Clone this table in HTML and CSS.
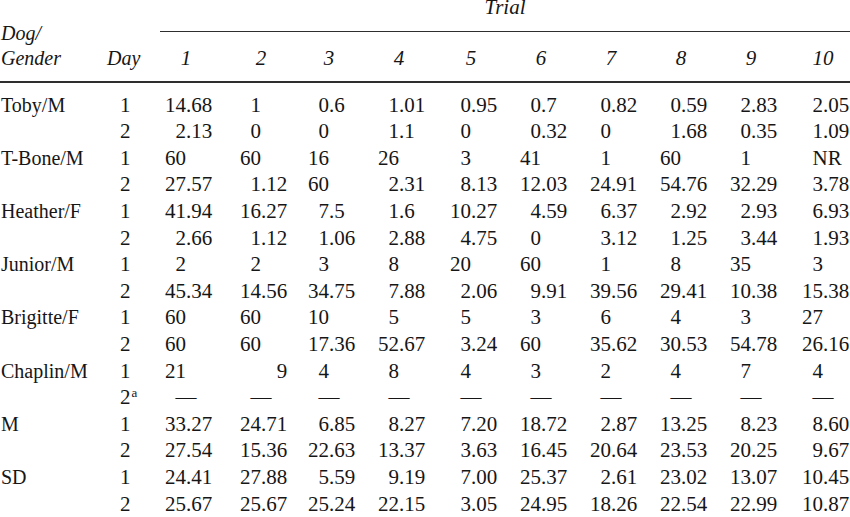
FILE: index.html
```html
<!DOCTYPE html>
<html lang="en">
<head>
<meta charset="utf-8">
<title>Trial latencies by dog</title>
<link rel="stylesheet" href="styles.css">
</head>
<body>
<table class="t">
  <colgroup>
    <col class="c-dog"><col class="c-day">
    <col class="w75"><col class="w68"><col class="w70"><col class="w72"><col class="w70">
    <col class="w70"><col class="w70"><col class="w70"><col class="w72"><col class="w53">
  </colgroup>
  <thead>
    <tr>
      <th class="dg" rowspan="2">Dog/<br>Gender</th>
      <th class="blank"></th>
      <th class="trial" colspan="10">Trial</th>
    </tr>
    <tr class="hr">
      <th class="dayh">Day</th>
      <th><span class="hn">1</span></th>
      <th><span class="hn">2</span></th>
      <th><span class="hn">3</span></th>
      <th><span class="hn">4</span></th>
      <th><span class="hn">5</span></th>
      <th><span class="hn">6</span></th>
      <th><span class="hn">7</span></th>
      <th><span class="hn">8</span></th>
      <th><span class="hn">9</span></th>
      <th><span class="hn">10</span></th>
    </tr>
  </thead>
  <tbody>
    <tr>
      <td class="lab">Toby/M</td><td class="day">1</td>
      <td><span class="i">14</span>.68</td><td><span class="i">1</span></td><td><span class="i">0</span>.6</td><td><span class="i">1</span>.01</td><td><span class="i">0</span>.95</td>
      <td><span class="i">0</span>.7</td><td><span class="i">0</span>.82</td><td><span class="i">0</span>.59</td><td><span class="i">2</span>.83</td><td><span class="i">2</span>.05</td>
    </tr>
    <tr>
      <td class="lab"></td><td class="day">2</td>
      <td><span class="i">2</span>.13</td><td><span class="i">0</span></td><td><span class="i">0</span></td><td><span class="i">1</span>.1</td><td><span class="i">0</span></td>
      <td><span class="i">0</span>.32</td><td><span class="i">0</span></td><td><span class="i">1</span>.68</td><td><span class="i">0</span>.35</td><td><span class="i">1</span>.09</td>
    </tr>
    <tr>
      <td class="lab">T-Bone/M</td><td class="day">1</td>
      <td><span class="i">60</span></td><td><span class="i">60</span></td><td><span class="i">16</span></td><td><span class="i">26</span></td><td><span class="i">3</span></td>
      <td><span class="i">41</span></td><td><span class="i">1</span></td><td><span class="i">60</span></td><td><span class="i">1</span></td><td class="off">NR</td>
    </tr>
    <tr>
      <td class="lab"></td><td class="day">2</td>
      <td><span class="i">27</span>.57</td><td><span class="i">1</span>.12</td><td><span class="i">60</span></td><td><span class="i">2</span>.31</td><td><span class="i">8</span>.13</td>
      <td><span class="i">12</span>.03</td><td><span class="i">24</span>.91</td><td><span class="i">54</span>.76</td><td><span class="i">32</span>.29</td><td><span class="i">3</span>.78</td>
    </tr>
    <tr>
      <td class="lab">Heather/F</td><td class="day">1</td>
      <td><span class="i">41</span>.94</td><td><span class="i">16</span>.27</td><td><span class="i">7</span>.5</td><td><span class="i">1</span>.6</td><td><span class="i">10</span>.27</td>
      <td><span class="i">4</span>.59</td><td><span class="i">6</span>.37</td><td><span class="i">2</span>.92</td><td><span class="i">2</span>.93</td><td><span class="i">6</span>.93</td>
    </tr>
    <tr>
      <td class="lab"></td><td class="day">2</td>
      <td><span class="i">2</span>.66</td><td><span class="i">1</span>.12</td><td><span class="i">1</span>.06</td><td><span class="i">2</span>.88</td><td><span class="i">4</span>.75</td>
      <td><span class="i">0</span></td><td><span class="i">3</span>.12</td><td><span class="i">1</span>.25</td><td><span class="i">3</span>.44</td><td><span class="i">1</span>.93</td>
    </tr>
    <tr>
      <td class="lab">Junior/M</td><td class="day">1</td>
      <td><span class="i">2</span></td><td><span class="i">2</span></td><td><span class="i">3</span></td><td><span class="i">8</span></td><td><span class="i">20</span></td>
      <td><span class="i">60</span></td><td><span class="i">1</span></td><td><span class="i">8</span></td><td><span class="i">35</span></td><td><span class="i">3</span></td>
    </tr>
    <tr>
      <td class="lab"></td><td class="day">2</td>
      <td><span class="i">45</span>.34</td><td><span class="i">14</span>.56</td><td><span class="i">34</span>.75</td><td><span class="i">7</span>.88</td><td><span class="i">2</span>.06</td>
      <td><span class="i">9</span>.91</td><td><span class="i">39</span>.56</td><td><span class="i">29</span>.41</td><td><span class="i">10</span>.38</td><td><span class="i">15</span>.38</td>
    </tr>
    <tr>
      <td class="lab">Brigitte/F</td><td class="day">1</td>
      <td><span class="i">60</span></td><td><span class="i">60</span></td><td><span class="i">10</span></td><td><span class="i">5</span></td><td><span class="i">5</span></td>
      <td><span class="i">3</span></td><td><span class="i">6</span></td><td><span class="i">4</span></td><td><span class="i">3</span></td><td><span class="i">27</span></td>
    </tr>
    <tr>
      <td class="lab"></td><td class="day">2</td>
      <td><span class="i">60</span></td><td><span class="i">60</span></td><td><span class="i">17</span>.36</td><td><span class="i">52</span>.67</td><td><span class="i">3</span>.24</td>
      <td><span class="i">60</span></td><td><span class="i">35</span>.62</td><td><span class="i">30</span>.53</td><td><span class="i">54</span>.78</td><td><span class="i">26</span>.16</td>
    </tr>
    <tr>
      <td class="lab">Chaplin/M</td><td class="day">1</td>
      <td><span class="i">21</span></td><td><span class="i"></span><span class="fr">9</span></td><td><span class="i">4</span></td><td><span class="i">8</span></td><td><span class="i">4</span></td>
      <td><span class="i">3</span></td><td><span class="i">2</span></td><td><span class="i">4</span></td><td><span class="i">7</span></td><td><span class="i">4</span></td>
    </tr>
    <tr>
      <td class="lab"></td><td class="day">2<sup>a</sup></td>
      <td class="off">—</td><td class="off">—</td><td class="off">—</td><td class="off">—</td><td class="off">—</td>
      <td class="off">—</td><td class="off">—</td><td class="off">—</td><td class="off">—</td><td class="off">—</td>
    </tr>
    <tr>
      <td class="lab">M</td><td class="day">1</td>
      <td><span class="i">33</span>.27</td><td><span class="i">24</span>.71</td><td><span class="i">6</span>.85</td><td><span class="i">8</span>.27</td><td><span class="i">7</span>.20</td>
      <td><span class="i">18</span>.72</td><td><span class="i">2</span>.87</td><td><span class="i">13</span>.25</td><td><span class="i">8</span>.23</td><td><span class="i">8</span>.60</td>
    </tr>
    <tr>
      <td class="lab"></td><td class="day">2</td>
      <td><span class="i">27</span>.54</td><td><span class="i">15</span>.36</td><td><span class="i">22</span>.63</td><td><span class="i">13</span>.37</td><td><span class="i">3</span>.63</td>
      <td><span class="i">16</span>.45</td><td><span class="i">20</span>.64</td><td><span class="i">23</span>.53</td><td><span class="i">20</span>.25</td><td><span class="i">9</span>.67</td>
    </tr>
    <tr>
      <td class="lab">SD</td><td class="day">1</td>
      <td><span class="i">24</span>.41</td><td><span class="i">27</span>.88</td><td><span class="i">5</span>.59</td><td><span class="i">9</span>.19</td><td><span class="i">7</span>.00</td>
      <td><span class="i">25</span>.37</td><td><span class="i">2</span>.61</td><td><span class="i">23</span>.02</td><td><span class="i">13</span>.07</td><td><span class="i">10</span>.45</td>
    </tr>
    <tr>
      <td class="lab"></td><td class="day">2</td>
      <td><span class="i">25</span>.67</td><td><span class="i">25</span>.67</td><td><span class="i">25</span>.24</td><td><span class="i">22</span>.15</td><td><span class="i">3</span>.05</td>
      <td><span class="i">24</span>.95</td><td><span class="i">18</span>.26</td><td><span class="i">22</span>.54</td><td><span class="i">22</span>.99</td><td><span class="i">10</span>.87</td>
    </tr>
  </tbody>
</table>
</body>
</html>
```
FILE: styles.css
```css
html, body {
  margin: 0;
  padding: 0;
  background: #ffffff;
}

body {
  color: #161616;
  font-family: "Liberation Serif", "Times New Roman", serif;
  overflow: hidden;
}

.t {
  border-collapse: separate;
  border-spacing: 0;
  table-layout: fixed;
  width: 850px;
}

.c-dog { width: 104px; }
.c-day { width: 56px; }
.w75 { width: 75px; }
.w68 { width: 68px; }
.w70 { width: 70px; }
.w72 { width: 72px; }
.w53 { width: 53px; }

th, td {
  padding: 0;
  white-space: nowrap;
  text-align: left;
  font-weight: normal;
}

/* ---------- header ---------- */
thead th {
  font-style: italic;
}

.dg {
  font-size: 20px;
  line-height: 25px;
  vertical-align: bottom;
  padding: 0 0 10px 1px;
  border-bottom: 2px solid #2e2e2e;
}

.blank {
  height: 31px;
}

.trial {
  font-size: 21px;
  line-height: 15px;
  height: 31px;
  vertical-align: top;
  text-align: center;
  border-bottom: 1px solid #2e2e2e;
}

.hr th {
  height: 39px;
  line-height: 25px;
  font-size: 21px;
  vertical-align: bottom;
  padding: 0 0 10px 5px;
  border-bottom: 2px solid #2e2e2e;
}

.hr th.dayh {
  font-size: 20px;
  padding-left: 3px;
}

.hn {
  display: inline-block;
  width: 2em;
  text-align: center;
}

/* ---------- body ---------- */
tbody td {
  font-size: 21px;
  line-height: 26.6px;
  vertical-align: baseline;
  padding-left: 5px;
}

tbody tr:first-child td {
  padding-top: 8.6px;
}

tbody td.lab {
  font-size: 20px;
  padding-left: 1px;
}

tbody td.day {
  padding-left: 16px;
}

.day sup {
  font-size: 13px;
  line-height: 0;
  vertical-align: 0.55em;
  margin-left: 1px;
}

.i {
  display: inline-block;
  width: 1em;
  text-align: right;
}

.fr {
  display: inline-block;
  width: 1.25em;
  text-align: right;
}

tbody td.off {
  padding-left: calc(5px + 0.5em);
}
```
